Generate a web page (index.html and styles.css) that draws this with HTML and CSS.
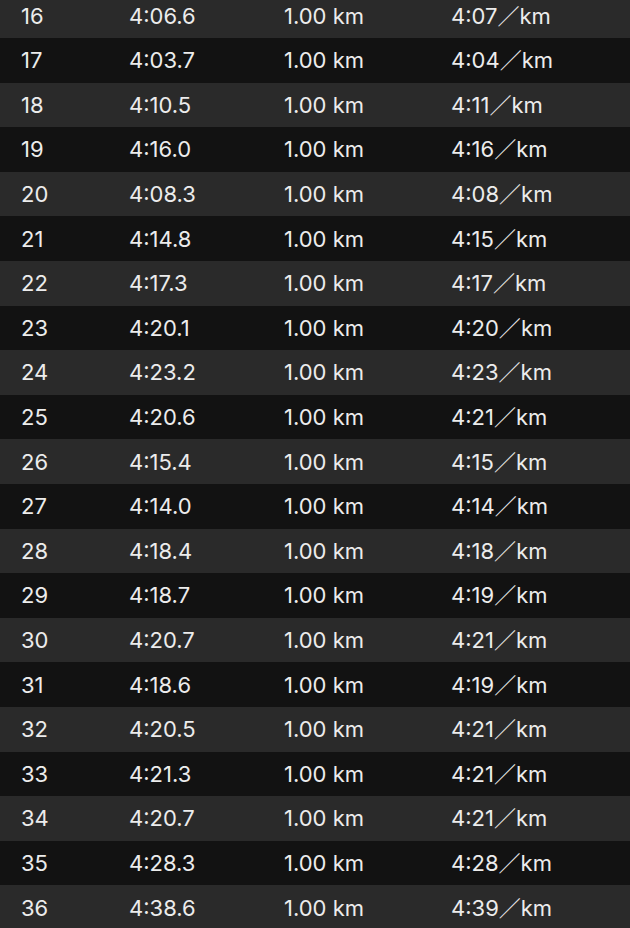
FILE: index.html
```html
<!DOCTYPE html>
<html>
<head>
<meta charset="utf-8">
<link rel="stylesheet" href="styles.css">
</head>
<body>
<div class="table">
  <div class="row alt"><span class="c1">16</span><span class="c2">4:06.6</span><span class="c3">1.00 km</span><span class="c4">4:07<span class="sl">／</span>km</span></div>
  <div class="row"><span class="c1">17</span><span class="c2">4:03.7</span><span class="c3">1.00 km</span><span class="c4">4:04<span class="sl">／</span>km</span></div>
  <div class="row alt"><span class="c1">18</span><span class="c2">4:10.5</span><span class="c3">1.00 km</span><span class="c4">4:11<span class="sl">／</span>km</span></div>
  <div class="row"><span class="c1">19</span><span class="c2">4:16.0</span><span class="c3">1.00 km</span><span class="c4">4:16<span class="sl">／</span>km</span></div>
  <div class="row alt"><span class="c1">20</span><span class="c2">4:08.3</span><span class="c3">1.00 km</span><span class="c4">4:08<span class="sl">／</span>km</span></div>
  <div class="row"><span class="c1">21</span><span class="c2">4:14.8</span><span class="c3">1.00 km</span><span class="c4">4:15<span class="sl">／</span>km</span></div>
  <div class="row alt"><span class="c1">22</span><span class="c2">4:17.3</span><span class="c3">1.00 km</span><span class="c4">4:17<span class="sl">／</span>km</span></div>
  <div class="row"><span class="c1">23</span><span class="c2">4:20.1</span><span class="c3">1.00 km</span><span class="c4">4:20<span class="sl">／</span>km</span></div>
  <div class="row alt"><span class="c1">24</span><span class="c2">4:23.2</span><span class="c3">1.00 km</span><span class="c4">4:23<span class="sl">／</span>km</span></div>
  <div class="row"><span class="c1">25</span><span class="c2">4:20.6</span><span class="c3">1.00 km</span><span class="c4">4:21<span class="sl">／</span>km</span></div>
  <div class="row alt"><span class="c1">26</span><span class="c2">4:15.4</span><span class="c3">1.00 km</span><span class="c4">4:15<span class="sl">／</span>km</span></div>
  <div class="row"><span class="c1">27</span><span class="c2">4:14.0</span><span class="c3">1.00 km</span><span class="c4">4:14<span class="sl">／</span>km</span></div>
  <div class="row alt"><span class="c1">28</span><span class="c2">4:18.4</span><span class="c3">1.00 km</span><span class="c4">4:18<span class="sl">／</span>km</span></div>
  <div class="row"><span class="c1">29</span><span class="c2">4:18.7</span><span class="c3">1.00 km</span><span class="c4">4:19<span class="sl">／</span>km</span></div>
  <div class="row alt"><span class="c1">30</span><span class="c2">4:20.7</span><span class="c3">1.00 km</span><span class="c4">4:21<span class="sl">／</span>km</span></div>
  <div class="row"><span class="c1">31</span><span class="c2">4:18.6</span><span class="c3">1.00 km</span><span class="c4">4:19<span class="sl">／</span>km</span></div>
  <div class="row alt"><span class="c1">32</span><span class="c2">4:20.5</span><span class="c3">1.00 km</span><span class="c4">4:21<span class="sl">／</span>km</span></div>
  <div class="row"><span class="c1">33</span><span class="c2">4:21.3</span><span class="c3">1.00 km</span><span class="c4">4:21<span class="sl">／</span>km</span></div>
  <div class="row alt"><span class="c1">34</span><span class="c2">4:20.7</span><span class="c3">1.00 km</span><span class="c4">4:21<span class="sl">／</span>km</span></div>
  <div class="row"><span class="c1">35</span><span class="c2">4:28.3</span><span class="c3">1.00 km</span><span class="c4">4:28<span class="sl">／</span>km</span></div>
  <div class="row alt"><span class="c1">36</span><span class="c2">4:38.6</span><span class="c3">1.00 km</span><span class="c4">4:39<span class="sl">／</span>km</span></div>
</div>
</body>
</html>
```

FILE: styles.css
```css
html, body {
  margin: 0;
  padding: 0;
  background: #121212;
  overflow: hidden;
}
.table {
  margin-top: -6.6px;
  display: flex;
  flex-direction: column;
}
.row {
  height: 44.6px;
  display: grid;
  grid-template-columns: 108px 155px 167px 1fr;
  align-items: center;
  padding-left: 21px;
  background: #121212;
  color: #ececec;
  font-family: Inter, "Noto Sans", sans-serif;
  font-size: 22px;
  line-height: 26px;
}
.row.alt {
  background: #2a2a2a;
}
.row span { white-space: nowrap; }
.sl {
  font-family: "Noto Sans CJK JP", sans-serif;
  line-height: 1;
  font-weight: 500;
}
```
